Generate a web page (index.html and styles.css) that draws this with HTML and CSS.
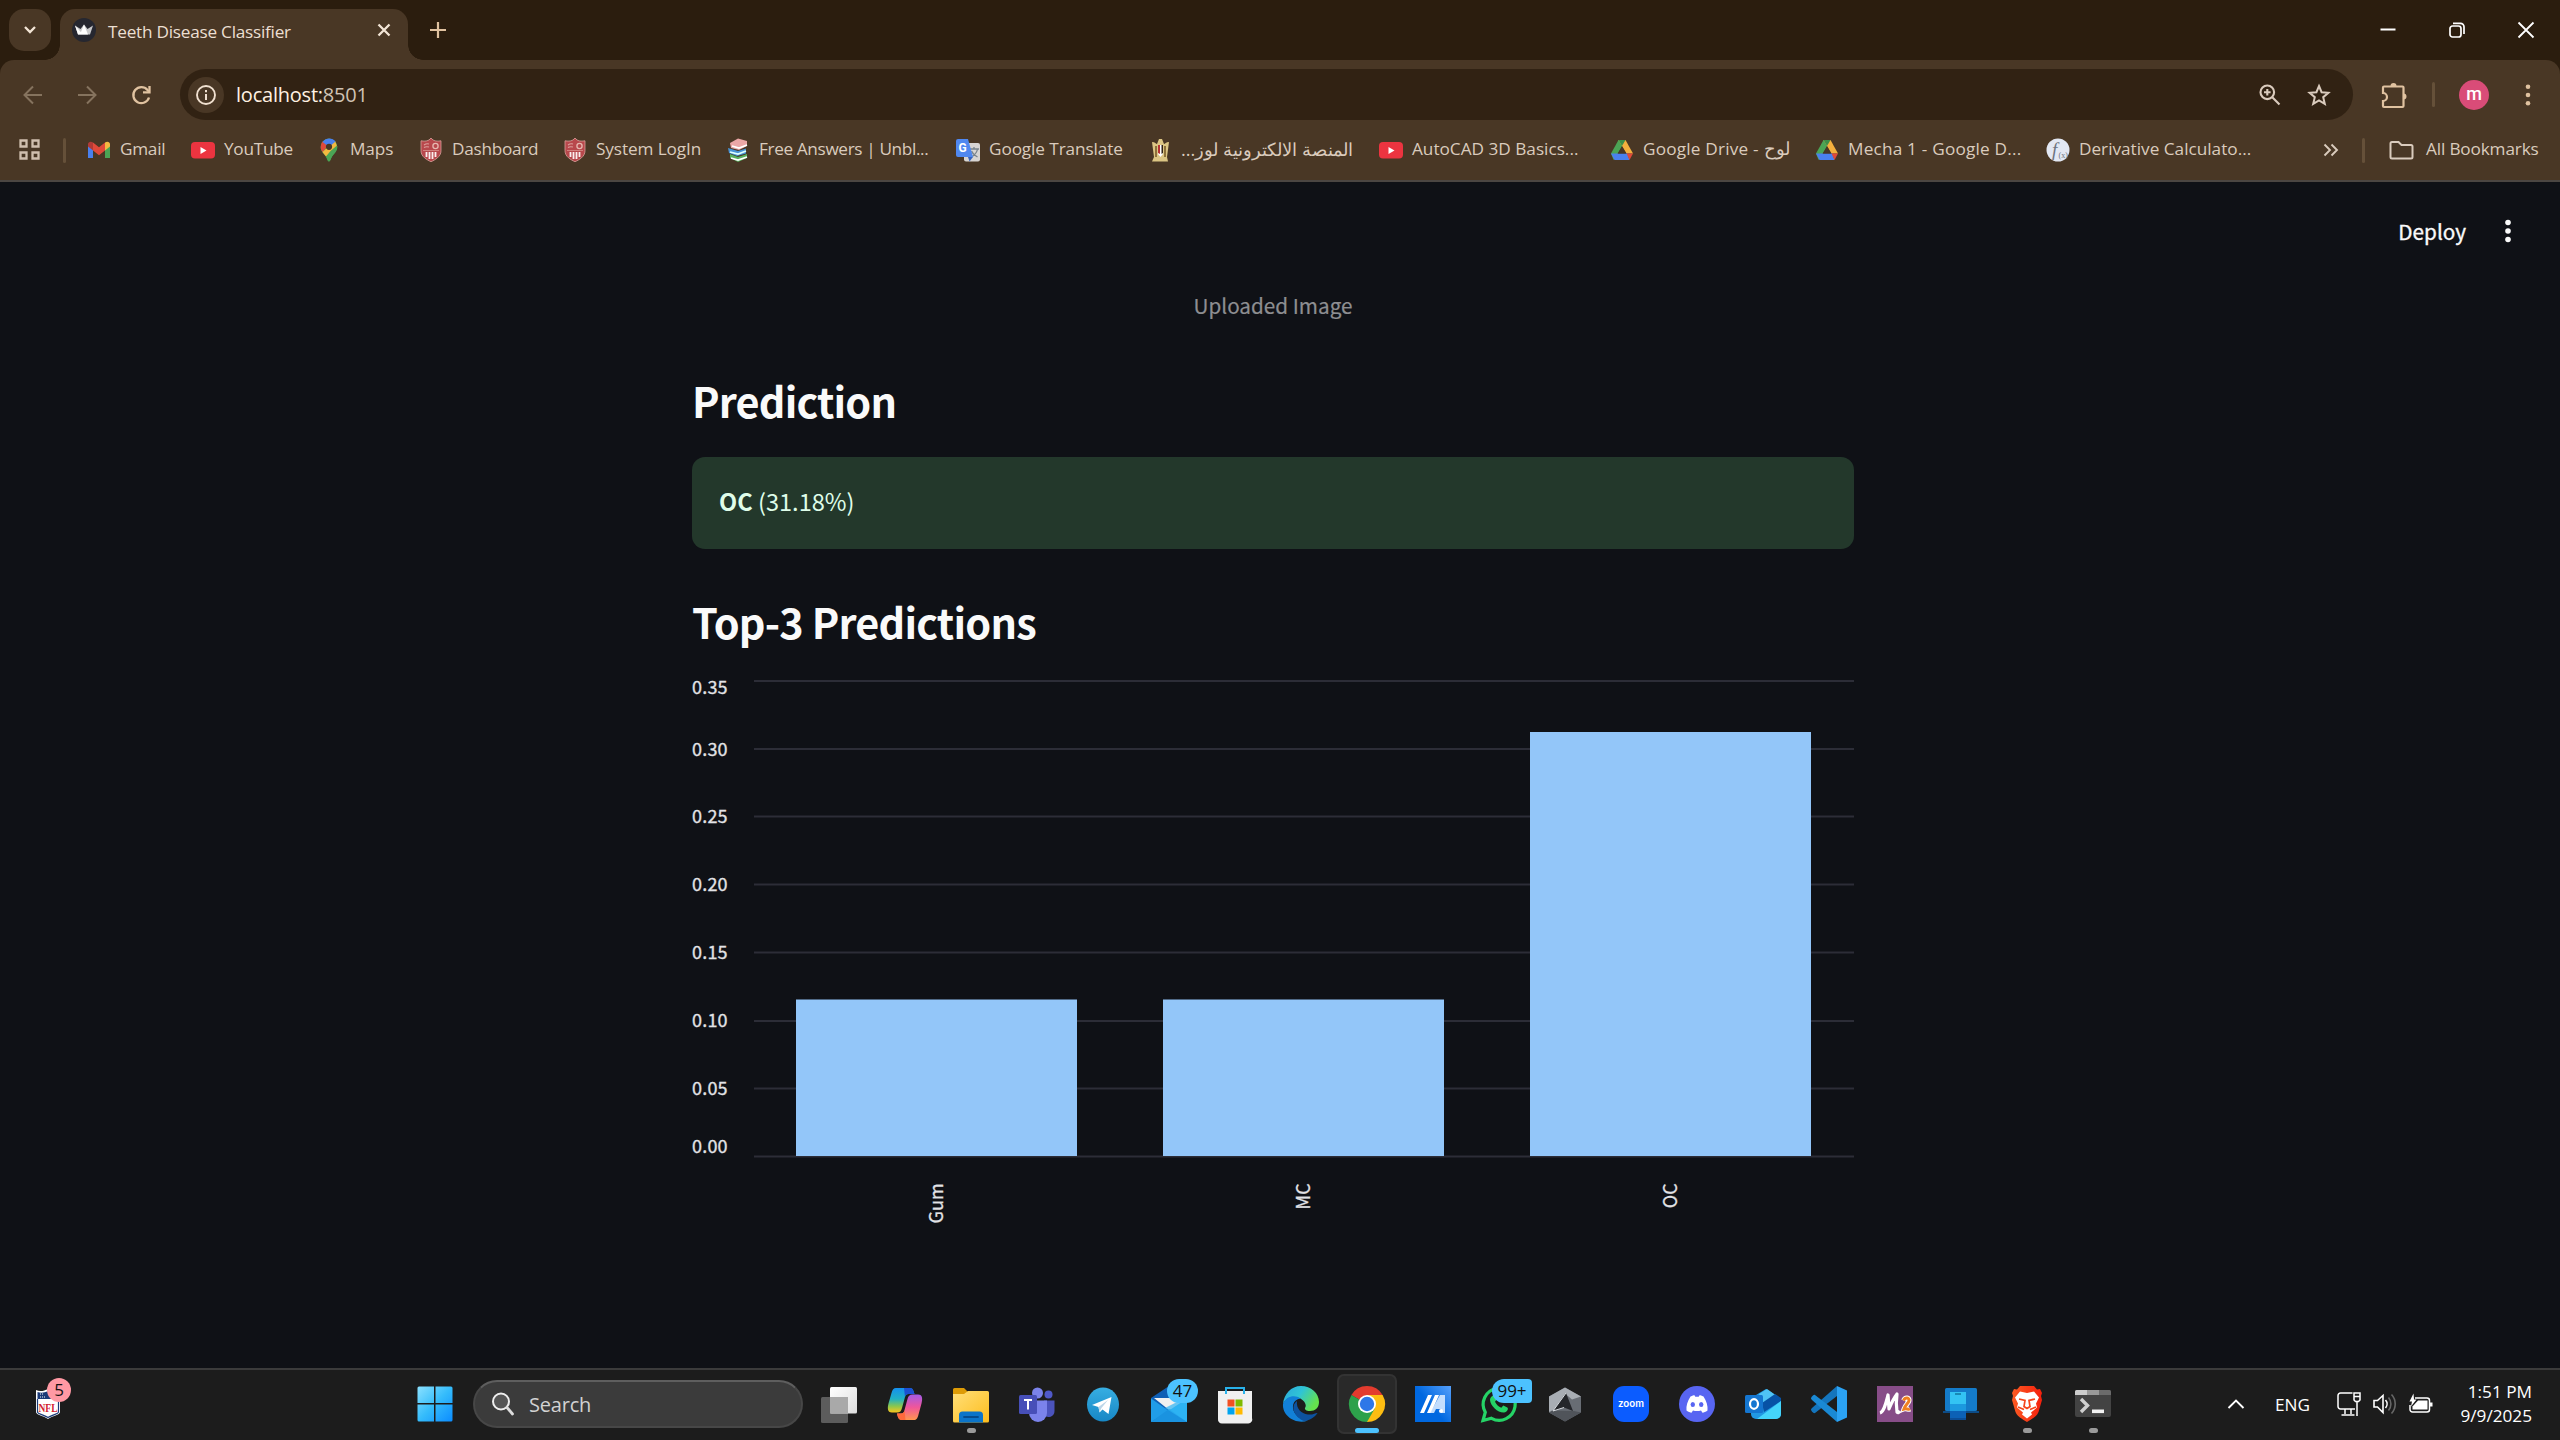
FILE: index.html
```html
<!DOCTYPE html>
<html lang="en">
<head>
<meta charset="utf-8">
<title>Teeth Disease Classifier</title>
<link rel="stylesheet" href="styles.css">
</head>
<body>
<svg class="defs" width="0" height="0" aria-hidden="true">
  <defs>
    <symbol id="youtube" viewBox="0 0 24 24"><rect y="4" width="24" height="16.500" rx="4" fill="#ec3440"/><path d="M9.500 9v7l6-3.500z" fill="#fff"/></symbol>
    <symbol id="drive" viewBox="0 0 24 24"><path d="M8.500 2h7l-8 14-4 6L1 15.500z" fill="#4ba455"/><path d="M15.500 2 23 15.500h-6.500L8.500 2z" fill="#f4b03e"/><path d="M8.500 2h7L12 8z" fill="#3c8f49"/><path d="M1 15.500h16.500L19.500 22h-15z" fill="#4a80ee"/><path d="M16.500 15.500H23L19.500 22z" fill="#e0493a"/><path d="M12 8.500l4.300 7H7.700z" fill="#493725"/></symbol>
    <symbol id="shield" viewBox="0 0 24 24"><path d="M12 0l2 2c3 1.500 5 1.200 8 .8v10c0 6-6 9-10 11C8 21.800 2 18.800 2 12.800v-10c3 .4 5 .7 8-.8z" fill="#b8484c" stroke="#d8a09b" stroke-width=".8"/><path d="M5 7c2-1.500 3.500-1.500 5-1M5 9.500c1.500-1 3-1 5-.5" stroke="#dba09c" fill="none" stroke-width="1.100"/><circle cx="16.500" cy="8" r="2.600" fill="none" stroke="#e6b8b0" stroke-width="1.300"/><path d="M4 12.500h16" stroke="#d8908c" stroke-width=".8"/><path d="M7.500 14v5M10.500 14v7M13.500 14v7M16.500 14v5" stroke="#fbeeee" stroke-width="1.800"/></symbol>
  </defs>
</svg>

<header class="browser">
  <div class="tabstrip">
    <button class="tab-search" aria-label="Search tabs"><svg width="14" height="10" viewBox="0 0 14 10"><path d="M2 2l5 5 5-5" class="line-light"/></svg></button>
    <div class="tab">
      <svg class="favicon" width="24" height="24" viewBox="0 0 24 24"><circle cx="12" cy="12" r="12" fill="#262730"/><path d="M3 7.500l5.500 3.500L12 6.500l3.500 4.500L21 7.500l-3 9H6z" fill="#c9c9cb"/><path d="M12 6.500l4 10H8zM3 7.500l8 9H6z" fill="#fff"/></svg>
      <span class="tab-title">Teeth Disease Classifier</span>
      <svg class="tab-close" width="14" height="14" viewBox="0 0 14 14"><path d="M1.500 1.500l11 11M12.500 1.500l-11 11" class="line-light"/></svg>
    </div>
    <svg class="new-tab" width="18" height="18" viewBox="0 0 18 18"><path d="M9 1v16M1 9h16" stroke="#e0c2a0" stroke-width="2.200"/></svg>
    <div class="window-controls">
      <svg width="18" height="18" viewBox="0 0 18 18"><path d="M1.500 8.500h15" stroke="#fff" stroke-width="2"/></svg>
      <svg width="18" height="18" viewBox="0 0 18 18" fill="none" stroke="#fff" stroke-width="1.700"><rect x="2" y="5" width="11" height="11" rx="2.500"/><path d="M5 2.300h7.500a3.500 3.500 0 0 1 3.500 3.500V13"/></svg>
      <svg width="18" height="18" viewBox="0 0 18 18"><path d="M1.500 1.500l15 15M16.500 1.500l-15 15" stroke="#fff" stroke-width="1.800"/></svg>
    </div>
  </div>

  <div class="toolbar">
    <div class="nav">
      <svg width="24" height="24" viewBox="0 0 24 24" fill="none" stroke="#85735e" stroke-width="2"><path d="M21 12H4M12 3.500L3.500 12l8.500 8.500"/></svg>
      <svg width="24" height="24" viewBox="0 0 24 24" fill="none" stroke="#85735e" stroke-width="2"><path d="M3 12h17M12 3.500l8.500 8.500-8.500 8.500"/></svg>
      <svg width="24" height="24" viewBox="0 0 24 24" fill="none" stroke="#e0c2a0" stroke-width="2.300"><path d="M20 14.500A8 8 0 1 1 18.500 7l1.500 1.500"/><path d="M20.500 3v6.300h-6.500"/></svg>
    </div>
    <div class="omnibox">
      <span class="site-info"><svg width="22" height="22" viewBox="0 0 22 22"><circle cx="11" cy="11" r="9" fill="none" stroke="#f0e0d0" stroke-width="1.900"/><path d="M11 10v6M11 6v2.200" stroke="#f0e0d0" stroke-width="2"/></svg></span>
      <span class="url"><b>localhost:</b>8501</span>
      <svg class="zoom" width="24" height="24" viewBox="0 0 24 24" fill="none" stroke="#dacbbd" stroke-width="2.100"><circle cx="9.300" cy="9.300" r="6.800"/><path d="M14.300 14.300l7.200 7.200M9.300 6v6.600M6 9.300h6.600"/></svg>
      <svg class="star" width="24" height="24" viewBox="0 0 24 24"><path d="M12 3l2.600 6.200 6.800.6-5.200 4.400 1.600 6.600-5.800-3.500-5.800 3.500 1.600-6.600-5.200-4.400 6.800-.6z" fill="none" stroke="#dacbbd" stroke-width="2"/></svg>
    </div>
    <div class="toolbar-end">
      <svg width="28" height="28" viewBox="0 0 28 28" fill="none" stroke="#e0c2a0" stroke-width="2.200"><path d="M4 5.500h18.500a1 1 0 0 1 1 1v18.500a1 1 0 0 1-1 1h-18.500a1 1 0 0 1-1-1v-5a4 4 0 0 0 0-8v-5.500a1 1 0 0 1 1-1z"/><path d="M10.500 5a3 3 0 0 1 6 0zM23.500 12.500a3 3 0 0 1 0 6z" fill="#e0c2a0" stroke="none"/></svg>
      <i class="divider"></i>
      <span class="avatar">m</span>
      <svg width="6" height="24" viewBox="0 0 6 24" fill="#e0c2a0"><circle cx="3" cy="3.700" r="2.300"/><circle cx="3" cy="12" r="2.300"/><circle cx="3" cy="20.300" r="2.300"/></svg>
    </div>
  </div>

  <div class="bookmark-bar">
    <svg class="apps" width="24" height="24" viewBox="0 0 24 24" fill="none" stroke="#d0bfae" stroke-width="2.300"><path d="M2.500 2.500h6v6h-6zM14.500 2.500h6v6h-6zM2.500 14.500h6v6h-6zM14.500 14.500h6v6h-6z"/></svg>
    <i class="divider"></i>
    <nav class="bookmarks">
      <a><svg width="24" height="24" viewBox="0 0 24 24"><path d="M1 5.500V20h5V11z" fill="#4a80ee"/><path d="M23 5.500V20h-5V11z" fill="#4ba455"/><path d="M1 6.500c0-3 3-3.500 5-2v8l-5-4z" fill="#b23a35"/><path d="M23 6.500c0-3-3-3.500-5-2v8l5-4z" fill="#f4b840"/><path d="M6 4.500l6 4.700 6-4.700v8l-6 4.700-6-4.700z" fill="#e0493a"/></svg><span class="tight">Gmail</span></a>
      <a><svg width="24" height="24"><use href="#youtube"/></svg><span class="tight">YouTube</span></a>
      <a><svg width="24" height="24" viewBox="0 0 24 24"><path d="M12 .5a8.500 8.500 0 0 0-8.300 8.800c0 4 3 6.200 5 9 1.500 2.300 2 5.200 3.300 5.200s1.800-2.900 3.300-5.200c2-2.800 5-5 5-9A8.500 8.500 0 0 0 12 .5z" fill="#4ba455"/><path d="M3.700 9c0-2 1-4.500 2.200-5.700l5 4.500L5.500 14c-1-1.500-1.800-3-1.800-5z" fill="#e0493a"/><path d="M5.500 14L18 2.700 20.300 9 9 18.500z" fill="#f4b840"/><path d="M13.500 13L20 7.500c.8 4-2 7-4 9.500-2 2-2.600 6.500-4 6.500s-1.800-3-3-5z" fill="#4ba455"/><path d="M5.500 4C9-.8 15.500-.5 18.500 3.500L12 9z" fill="#4a80ee"/><circle cx="12" cy="8.800" r="3.100" fill="#493725"/></svg><span class="snug">Maps</span></a>
      <a><svg width="24" height="24"><use href="#shield"/></svg><span class="tight">Dashboard</span></a>
      <a><svg width="24" height="24"><use href="#shield"/></svg><span class="snug">System LogIn</span></a>
      <a><svg width="24" height="24" viewBox="0 0 24 24"><path d="M4 5l8-4.500L21 3v5l-8 4-8-2z" fill="#eba7a7"/><path d="M6 8l7 2 8-3" stroke="#fff" stroke-width="1.800" fill="none"/><path d="M2 10l10 3 8-2.500v5L11 18l-8-3z" fill="#4894d6"/><path d="M4 14l8 2 8-3" stroke="#dff" stroke-width="1.800" fill="none"/><path d="M4 16l8 3 9-3v4l-9 4-8-4z" fill="#57b05f"/><path d="M5 20l7 2 9-3" stroke="#fff" stroke-width="1.800" fill="none"/></svg><span class="tighter">Free Answers | Unbl...</span></a>
      <a><svg width="24" height="24" viewBox="0 0 24 24"><rect x="8" y="5" width="16" height="18.500" rx="2" fill="#d8d5d3"/><path d="M14 11h9M18 9v2M21.500 11c-.5 4-3 6-6 8M15.500 13c1 2.500 3.500 4.500 6 6" stroke="#78838c" stroke-width="1.300" fill="none"/><path d="M2 1h10l5 18H2a2 2 0 0 1-2-2V3a2 2 0 0 1 2-2z" fill="#5088f0"/><path d="M12 19h5l-3.500 4.500z" fill="#3864bd"/><text x="2.500" y="14" class="g-letter">G</text></svg><span class="snug">Google Translate</span></a>
      <a><svg width="24" height="24" viewBox="0 0 24 24"><path d="M4 4c3 0 4 2 5 2l2-5h3l2 5c1 0 2-2 5-2l-2 15 1 4.500H4L6 19z" fill="#dcc684"/><path d="M8 8v11M17 8v11" stroke="#7a5c28" stroke-width="1.600"/><path d="M10 7h5v9l-2.500 3-2.500-3z" fill="#fff"/><path d="M10 7h2v9l-2-1z" fill="#b63434"/><path d="M13.500 7H15v8l-1.500 1z" fill="#312213"/></svg><span class="arabic" dir="rtl">المنصة الالكترونية لوز...</span></a>
      <a><svg width="24" height="24"><use href="#youtube"/></svg><span>AutoCAD 3D Basics...</span></a>
      <a><svg width="24" height="24"><use href="#drive"/></svg><span class="wide-text">Google Drive - <bdi class="arabic-word">لوح</bdi></span></a>
      <a><svg width="24" height="24"><use href="#drive"/></svg><span class="wide-text">Mecha 1 - Google D...</span></a>
      <a><svg width="24" height="24" viewBox="0 0 24 24"><circle cx="12" cy="12" r="11.500" fill="#e3e8f3"/><text x="6" y="18" class="fx">f</text><text x="12.500" y="20" class="fx-sub">(x)</text></svg><span>Derivative Calculato...</span></a>
    </nav>
    <svg class="more" width="16" height="14" viewBox="0 0 16 14" fill="none" stroke="#dacbbd" stroke-width="1.900"><path d="M1.500 1.500L7 7l-5.500 5.500M8.500 1.500L14 7l-5.500 5.500"/></svg>
    <i class="divider"></i>
    <svg class="folder" width="26" height="20" viewBox="0 0 26 20"><path d="M3 2h6.500l3 3H22a1.500 1.500 0 0 1 1.500 1.500V17A1.500 1.500 0 0 1 22 18.500H3A1.500 1.500 0 0 1 1.500 17V3.500A1.500 1.500 0 0 1 3 2z" fill="none" stroke="#dacbbd" stroke-width="2"/></svg>
    <span class="all-bookmarks">All Bookmarks</span>
  </div>
</header>

<main class="app">
  <div class="app-bar">
    <span class="deploy">Deploy</span>
    <svg width="8" height="26" viewBox="0 0 8 26" fill="#fafafa"><circle cx="4" cy="4.500" r="2.800"/><circle cx="4" cy="13" r="2.800"/><circle cx="4" cy="21.500" r="2.800"/></svg>
  </div>
  <section class="content">
    <p class="caption"><span>Uploaded Image</span></p>
    <h3 class="h-pred"><span>Prediction</span></h3>
    <div class="alert"><span><b>OC</b> (31.18%)</span></div>
    <h3 class="h-top"><span>Top-3 Predictions</span></h3>
    <svg class="chart" width="1162" height="560" viewBox="692 670 1162 560">
      <path class="grid" d="M754 681h1100M754 749h1100M754 816.500h1100M754 884.500h1100M754 952.500h1100M754 1021h1100M754 1088.500h1100M754 1156.500h1100"/>
      <g class="bars"><rect x="796" y="999.500" width="281" height="156.500"/><rect x="1163" y="999.500" width="281" height="156.500"/><rect x="1530" y="732" width="281" height="424"/></g>
      <g class="axis">
        <text x="692" y="694">0.35</text><text x="692" y="756">0.30</text><text x="692" y="823">0.25</text><text x="692" y="891">0.20</text><text x="692" y="959">0.15</text><text x="692" y="1027">0.10</text><text x="692" y="1095">0.05</text><text x="692" y="1153">0.00</text>
      </g>
      <g class="axis names">
        <text transform="translate(942.500 1183) rotate(-90)">Gum</text><text transform="translate(1309.500 1183) rotate(-90)">MC</text><text transform="translate(1676.500 1183) rotate(-90)">OC</text>
      </g>
    </svg>
  </section>
</main>

<footer class="taskbar">
  <div class="widget"><svg width="26" height="32" viewBox="0 0 26 32"><path d="M1 2c4 2 8 1 12-1 4 2 8 3 12 1v22c0 3-8 4-12 7-4-3-12-4-12-7z" fill="#fff"/><path d="M2.500 4c4 1.500 7 .5 10.500-1 3.500 1.500 6.500 2.500 10.500 1v7h-21z" fill="#1b3a78"/><path d="M2.500 11v13c0 2 7 3 10.500 5.500C16.500 27 23.500 26 23.500 24V11" fill="none" stroke="#1b3a78" stroke-width="1.200"/><path d="M5 6h3M5 9h5M17 6h3" stroke="#fff" stroke-dasharray="1 1"/><text x="3.500" y="24" class="nfl" textLength="19" lengthAdjust="spacingAndGlyphs">NFL</text></svg><span class="badge pink">5</span></div>

  <svg class="start" width="36" height="36" viewBox="0 0 36 36"><defs><linearGradient id="win" x2="1" y2="1"><stop stop-color="#8be1ff"/><stop offset=".5" stop-color="#35bcfb"/><stop offset="1" stop-color="#0b8cff"/></linearGradient></defs><path d="M2 .5h15v16.500H.5V2A1.500 1.500 0 0 1 2 .5zM18.500.5H34A1.500 1.500 0 0 1 35.500 2v15h-17zM.5 18.500H17v17H2A1.500 1.500 0 0 1 .5 34zM18.500 18.500h17V34a1.500 1.500 0 0 1-1.500 1.500H18.500z" fill="url(#win)"/></svg>

  <div class="search"><svg width="24" height="26" viewBox="0 0 24 26"><circle cx="10" cy="10.500" r="8" fill="#555" stroke="#eee" stroke-width="2"/><path d="M16 16.500l5.500 6.500" stroke="#ddd" stroke-width="2.800" stroke-linecap="round"/></svg><span>Search</span></div>

  <div class="apps-row">
    <div class="app-icon"><svg viewBox="0 0 36 36"><defs><linearGradient id="tv" x2="1" y2="1"><stop stop-color="#fff"/><stop offset="1" stop-color="#dedede"/></linearGradient></defs><rect x="0" y="11" width="27" height="26" rx="1.500" fill="#5c5c5c"/><rect x="9" y="1" width="27" height="26.500" rx="1.500" fill="url(#tv)"/><path d="M9 11h18v16.500H9z" fill="#a9a9a9"/></svg></div>
    <div class="app-icon"><svg viewBox="0 0 36 36"><defs><linearGradient id="c1" x2="0" y2="1"><stop stop-color="#1590ef"/><stop offset=".45" stop-color="#20b1c4"/><stop offset=".75" stop-color="#8dc74c"/><stop offset="1" stop-color="#fbc51c"/></linearGradient><linearGradient id="c2" x2="0" y2="1"><stop stop-color="#a25ae8"/><stop offset=".5" stop-color="#f0569a"/><stop offset="1" stop-color="#ff974e"/></linearGradient></defs><path d="M9 2h14c3 0 3.500 3 4.500 6h-6c-2 0-3 1-3.500 3l-3 11c-.8 3-2 4.500-5 4.500H5c-5 0-4.500-5-3.500-9L4.500 7C5.500 3.500 6.500 2 9 2z" fill="url(#c1)"/><path d="M17 2h6c3 0 3.500 3 4.500 6h-6c-2 0-3 1-3.500 3z" fill="#1b50d2"/><path d="M27 34H15c-3 0-4-2-5-6.500h4c2.500 0 3-1.500 3.500-3.500l3-11c.8-3 2-4.500 5-4.500H31c5 0 4.500 5 3.500 9l-3 11C30.500 32.500 29.500 34 27 34z" fill="url(#c2)"/><path d="M10 27.500h4c2.500 0 3-1.500 3.500-3.500l1 10H15c-3 0-4-2-5-6.500z" fill="#ff6a3c"/></svg></div>
    <div class="app-icon"><svg viewBox="0 0 36 36"><defs><linearGradient id="fe" x2="1" y2="1"><stop stop-color="#ffdf79"/><stop offset="1" stop-color="#fdbd1d"/></linearGradient></defs><path d="M0 3.500A1.500 1.500 0 0 1 1.500 2H11l4 4-3 3H0z" fill="#dd9b06"/><path d="M0 8h11l4-3h19.500A1.500 1.500 0 0 1 36 6.500V35a1.500 1.500 0 0 1-1.500 1.500h-33A1.500 1.500 0 0 1 0 35z" fill="url(#fe)"/><path d="M6 36.500V29a3.500 3.500 0 0 1 3.500-3.500h17A3.500 3.500 0 0 1 30 29v7.500z" fill="#0b74c9"/><path d="M11 31h14" stroke="#064b8c" stroke-width="1.800" stroke-linecap="round"/></svg><i class="dot"></i></div>
    <div class="app-icon"><svg viewBox="0 0 36 36"><circle cx="29.500" cy="8.500" r="4" fill="#5059c9"/><path d="M25 14.500h10.500V25a6 6 0 0 1-10.500 4z" fill="#4b53bc"/><circle cx="18.500" cy="7" r="5.500" fill="#7b83eb"/><path d="M10 14.500h18V27a9 9 0 0 1-18 0z" fill="#7b83eb"/><rect y="9" width="18" height="19" rx="1.500" fill="#474fb8"/><path d="M5 14h8M9 14v9.500" stroke="#fff" stroke-width="2"/></svg></div>
    <div class="app-icon"><svg viewBox="0 0 36 36"><defs><linearGradient id="tg" x2="0" y2="1"><stop stop-color="#37aee2"/><stop offset="1" stop-color="#1787c5"/></linearGradient></defs><ellipse cx="18" cy="18.500" rx="16" ry="17" fill="url(#tg)"/><path d="M7 19L26.500 11l-3 17-6-4.500-3 3-1-5.500z" fill="#fff"/><path d="M13.500 21l9.500-7-6.500 8-2 4z" fill="#bcd6e8"/></svg></div>
    <div class="app-icon"><svg viewBox="0 0 36 36"><path d="M0 12L18 0l18 12v24H0z" fill="#0f5fb5"/><path d="M3 12h30v8L18 24z" fill="#f0f0f0"/><path d="M0 12.500L18 25 0 36z" fill="#209de8"/><path d="M36 12.500L18 24.500 36 36z" fill="#2fb4f4"/><path d="M0 36l18-13 18 13z" fill="#1a93e0"/><path d="M14 22L36 11v25z" fill="#2cb2f2" opacity=".7"/></svg><span class="badge mail">47</span></div>
    <div class="app-icon"><svg viewBox="0 0 36 36"><path d="M9 8V2h18v6" fill="none" stroke="#28b1ea" stroke-width="2"/><path d="M1 5h34v27a4 4 0 0 1-4 5.500H5A4 4 0 0 1 1 33z" fill="#f0f0f0"/><path d="M9 8V5M27 8V5" stroke="#28b1ea" stroke-width="2"/><path d="M10.500 13.500h7v7h-7z" fill="#f25022"/><path d="M18.500 13.500h7v7h-7z" fill="#7fba00"/><path d="M10.500 21.500h7v7h-7z" fill="#00a4ef"/><path d="M18.500 21.500h7v7h-7z" fill="#ffb900"/></svg></div>
    <div class="app-icon"><svg viewBox="0 0 36 36"><defs><linearGradient id="ed" x2="1" y2=".5"><stop stop-color="#2ba6dc"/><stop offset=".5" stop-color="#2fc4d6"/><stop offset="1" stop-color="#65e24d"/></linearGradient></defs><path d="M0 18C1 8 8 0 18 0c10 0 18 7 18 16 0 6-4 9-9 9-4 0-5.500-1.500-5-3 1-1.500 1-3 0-5C18 10 5 8 0 18z" fill="url(#ed)"/><path d="M0 18C3 10 12 8.500 17.500 12.500c-8 1-9 9-6 14C14 31 20 35 25 34.500 13 39-1 30 0 18z" fill="#1280d8"/><path d="M14 15c-7 5-3 16 7 20 5 0 11-4 13.500-8-1-.5-4.500 2-9.500 1.500-7-1-12-6-11-13.500z" fill="#0d529f"/></svg></div>
    <div class="app-icon active"><svg viewBox="0 0 36 36"><path d="M18 18L2.400 9A18 18 0 0 1 33.600 9z" fill="#e33b2e"/><path d="M18 18L2.400 9A18 18 0 0 0 18 36l7.800-13.500z" fill="#2da14b"/><path d="M18 18V9h15.600A18 18 0 0 1 18 36z" fill="#fdbd12"/><path d="M10.200 22.500L18 36l7.800-13.500z" fill="#2da14b"/><circle cx="18" cy="18" r="9" fill="#fff"/><circle cx="18" cy="18" r="7.200" fill="#2d77e8"/></svg><i class="running"></i></div>
    <div class="app-icon"><svg viewBox="0 0 36 36"><defs><linearGradient id="ma" x1="1" x2=".4" y2=".5"><stop stop-color="#55a0fb"/><stop offset="1" stop-color="#0068e0"/></linearGradient></defs><path d="M0 0h36v36H0z" fill="url(#ma)"/><path d="M13 9h4L9 27H5zM20 9h4l-8 18h-4z" fill="#fff"/><path d="M25 9h5v18h-4v-4h-5l-2 4h-4z" fill="#d5e8ff" opacity=".9"/><circle cx="26" cy="25" r="2" fill="#fff"/></svg></div>
    <div class="app-icon"><svg viewBox="0 0 36 36"><path d="M2 34.500l2.300-8.300A16 16 0 1 1 10.500 32.300z" fill="#1c1c1c" stroke="#25d366" stroke-width="3.200"/><path d="M12 9.500c1-.6 2 0 2.500 1l1.200 3-1.700 2.300c1.500 3.200 3.500 4.700 6.300 6l2-2.200 4 2c1.500 1 0 4.500-3.300 5C17 27 9.500 20 9 14c0-2 1.500-4 3-4.500z" fill="#25d366"/></svg><span class="badge wide">99+</span></div>
    <div class="app-icon"><svg viewBox="0 0 36 36"><path d="M18 1.500l16 9v16l-16 9-16-9v-16z" fill="#686d74"/><path d="M18 1.500l16 9-9 3-7-6-13 19-3-1v-15z" fill="#a8adb3"/><path d="M18 35.500l-16-9 3-2 22 .5 7 1.500z" fill="#50545a"/><path d="M19 7l7 18-9-3.500-11 3.500z" fill="#24262a"/><path d="M19 7L6 25l11-3.500" fill="none" stroke="#d6dade" stroke-width="1"/></svg></div>
    <div class="app-icon"><svg viewBox="0 0 36 36"><rect width="36" height="36" rx="11" fill="#0b5cff"/><text x="18" y="21" class="zoom-word" textLength="26" lengthAdjust="spacingAndGlyphs">zoom</text></svg></div>
    <div class="app-icon"><svg viewBox="0 0 36 36"><circle cx="18" cy="18" r="18" fill="#5865f2"/><path d="M11.500 10.500c2-1 3-1.200 4-1.300l.8 1.500h3.400l.8-1.500c1 .1 2 .3 4 1.300 3 5 4.500 9 4 14-2 1.500-3.500 2-5 2.300l-1.500-2.300c-2.500.7-5.500.7-8 0l-1.500 2.300c-1.500-.3-3-.8-5-2.300-.5-5 1-9 4-14z" fill="#fff"/><ellipse cx="13.800" cy="18.500" rx="2.200" ry="2.500" fill="#5865f2"/><ellipse cx="22.200" cy="18.500" rx="2.200" ry="2.500" fill="#5865f2"/></svg></div>
    <div class="app-icon"><svg viewBox="0 0 36 36"><path d="M6 12L21 3l15 10v15a5 5 0 0 1-5 5H11a5 5 0 0 1-5-5z" fill="#2198e3"/><path d="M14 8l8-5 10 7-14 9z" fill="#4fc4f5"/><path d="M17 17L30 8l6 4v3L19 26z" fill="#0752a5"/><path d="M36 15v13a5 5 0 0 1-5 5H12z" fill="#44d4fb"/><rect y="9" width="18" height="18" rx="1.500" fill="#1576d0"/><ellipse cx="9" cy="18" rx="4" ry="4.800" fill="none" stroke="#fff" stroke-width="2.200"/></svg></div>
    <div class="app-icon"><svg viewBox="0 0 36 36"><path d="M26 0v10L4 27c-1 .6-3-1-4-3 0-1 .5-1.500 1-2z" fill="#1475bd"/><path d="M26 36V26L4 9c-1-.6-3 1-4 3 0 1 .5 1.500 1 2z" fill="#1a89d4"/><path d="M26 0l10 4.500v27L26 36z" fill="#2ba2f3"/></svg></div>
    <div class="app-icon"><svg viewBox="0 0 36 36"><path d="M0 0h36v36H0z" fill="#874d88"/><path d="M3 27c4-1 6-10 8-18 .5 5 .5 9 1 14 2-5 5-11 8-15-1 7-1 12 0 18 1 1 2 .5 3-1" fill="none" stroke="#fff" stroke-width="3.200" stroke-linejoin="round"/><path d="M26.500 14.500c2-4 6-2.500 5.500 0-.5 3-3.500 4-5 8.500 3-1 4 1 6 0" fill="none" stroke="#fff" stroke-width="5"/><path d="M26.500 14.500c2-4 6-2.500 5.500 0-.5 3-3.500 4-5 8.500 3-1 4 1 6 0" fill="none" stroke="#f08020" stroke-width="3"/></svg></div>
    <div class="app-icon"><svg viewBox="0 0 36 36"><rect x="2" y="2" width="32" height="23" rx="1.500" fill="#147bc9"/><path d="M0 25h36v2H0z" fill="#0d4c87"/><path d="M7 6h16v12H7z" fill="#33c3f3"/><path d="M7 18h16v7H7z" fill="#1c99df"/><path d="M7 25h16v7H7z" fill="#0c61b6"/><path d="M7 32h16v2H7z" fill="#0b4d96"/><path d="M12 8h6" stroke="#12779f" stroke-width="1.500"/></svg></div>
    <div class="app-icon"><svg viewBox="0 0 36 36"><defs><linearGradient id="br" x2="1"><stop stop-color="#fb5a22"/><stop offset="1" stop-color="#f5200d"/></linearGradient></defs><path d="M11 0h14l3 3.500 3-.5 2 4-1 3 1 4-3.500 12c-2 5-7 7-11.500 10-4.500-3-9.500-5-11.500-10L3 14l1-4-1-3 2-4 3 .5z" fill="url(#br)"/><path d="M18 7l7-1.500 5 6-3 6 1 4-6 5 1 2-5 4-5-4 1-2-6-5 1-4-3-6 5-6z" fill="#fff"/><path d="M10 13l6 1.500-1 6 3 2 3-2-1-6 6-1.500M9 21l6 2.500M27 21l-6 2.500" fill="none" stroke="#f5451b" stroke-width="1.700"/></svg><i class="dot"></i></div>
    <div class="app-icon"><svg viewBox="0 0 36 36"><rect y="4" width="36" height="27" rx="2" fill="#434343"/><path d="M0 9V5.500A1.500 1.500 0 0 1 1.500 4H12v5z" fill="#ccc"/><path d="M12 4h12v5H12z" fill="#999"/><path d="M24 4h10.500A1.500 1.500 0 0 1 36 5.500V9H24z" fill="#6b6b6b"/><path d="M6 13l6.500 6.500L6 26" fill="none" stroke="#d0d0d0" stroke-width="3.400"/><path d="M17 25.300h12" stroke="#f2f2f2" stroke-width="3.600"/></svg><i class="dot"></i></div>
  </div>

  <div class="tray">
    <svg width="18" height="12" viewBox="0 0 18 12"><path d="M1.500 10L9 2.500l7.500 7.500" fill="none" stroke="#fff" stroke-width="1.900"/></svg>
    <span class="lang">ENG</span>
    <div class="status">
      <svg width="24" height="26" viewBox="0 0 24 26" fill="none" stroke="#fff" stroke-width="1.500"><path d="M15.500 2H3.500A2.500 2.500 0 0 0 1 4.500v11A2.500 2.500 0 0 0 3.500 18H18M8 18v5M14 18v5M4.500 24h13"/><path d="M17 2h6v7l-1.500 1.500h-3L17 9zM17 5.500h6M20 10.500V25"/></svg>
      <svg width="24" height="22" viewBox="0 0 24 22" fill="none" stroke="#fff" stroke-width="1.600"><path d="M1 7.500h3.500L10 2.500v17L4.500 14H1z"/><path d="M12.500 7a6 6 0 0 1 0 8"/><path d="M15.500 4.500a10 10 0 0 1 0 13M18.500 1.500a14 14 0 0 1 0 19" stroke="#666"/></svg>
      <svg width="24" height="22" viewBox="0 0 24 22"><path d="M6 5h12a2.500 2.500 0 0 1 2.500 2.500v9A2.500 2.500 0 0 1 18 19H3.500A2.500 2.500 0 0 1 1 16.500V12" fill="none" stroke="#fff" stroke-width="1.500"/><path d="M9 7.500h9.500v9H3.500v-3z" fill="#fff"/><path d="M21 9.500h2.500v4H21zM4.500.5l-4 8H3l-1 5 5.500-7H5z" fill="#fff"/></svg>
    </div>
    <div class="clock"><span class="time">1:51 PM</span><span class="date">9/9/2025</span></div>
  </div>
</footer>
</body>
</html>
```
FILE: styles.css
```css
* { box-sizing: border-box; }
body {
  margin: 0;
  width: 2560px;
  height: 1440px;
  overflow: hidden;
  display: grid;
  grid-template-rows: 182px 1186px 72px;
  background: #0f1116;
  font-family: "Open Sans", "Noto Sans", sans-serif;
}
svg { display: block; flex: none; }
.defs { position: absolute; }
.line-light { fill: none; stroke: #f3e5d6; stroke-width: 2.3; }
.divider { width: 3px; height: 25px; border-radius: 2px; background: #655039; flex: none; }

/* Browser chrome */
.browser { background: #2b1d0e; border-bottom: 2px solid #4b4642; display: grid; grid-template-rows: 60px 60px 60px; }
.tabstrip { display: flex; align-items: center; padding: 0 25px 0 9px; }
.tab-search { width: 42px; height: 42px; border: 0; border-radius: 15px; background: #493725; display: grid; place-items: center; padding: 0; }
.tab { position: relative; align-self: flex-end; margin-left: 9px; width: 348px; height: 51px; border-radius: 15px 15px 0 0; background: #493725; display: flex; align-items: center; padding: 0 17px 9px 12px; }
.tab::before, .tab::after { content: ""; position: absolute; bottom: 0; width: 15px; height: 15px; }
.tab::before { left: -15px; background: radial-gradient(circle at 0 0, transparent 14.5px, #493725 15px); }
.tab::after { right: -15px; background: radial-gradient(circle at 100% 0, transparent 14.5px, #493725 15px); }
.tab-title { margin-left: 12px; padding-top: 3px; font-size: 17.2px; letter-spacing: -.24px; color: #ecdfd2; white-space: nowrap; flex: 1; }
.new-tab { margin-left: 21px; }
.window-controls { margin-left: auto; display: flex; gap: 51px; }
.toolbar { background: #493725; display: flex; align-items: center; padding-top: 9px; border-radius: 14px 14px 0 0; }
.nav { display: flex; gap: 30px; margin-left: 21px; width: 159px; }
.omnibox { width: 2173px; height: 51px; border-radius: 26px; background: #312213; display: flex; align-items: center; padding: 0 22px 0 8px; }
.site-info { width: 36px; height: 36px; border-radius: 50%; background: #493725; display: grid; place-items: center; }
.url { margin-left: 12px; font-size: 20px; letter-spacing: -.22px; color: #d0c3b4; flex: 1; }
.url b { font-weight: 400; color: #fff1e2; }
.star { margin-left: 25px; }
.toolbar-end { display: flex; align-items: center; margin-left: 27px; }
.toolbar-end .divider { margin-left: 24px; }
.avatar { margin-left: 24px; width: 30px; height: 30px; border-radius: 50%; background: #d94c78; color: #fff; font: 500 18px/28px Roboto, sans-serif; text-align: center; }
.avatar + svg { margin-left: 36px; }
.bookmark-bar { background: #493725; display: flex; align-items: center; color: #dacbbd; font-size: 17.2px; white-space: nowrap; }
.apps { margin-left: 18px; }
.apps + .divider { margin-left: 21px; }
.bookmarks { margin-left: 21px; width: 2236px; display: grid; grid-template-columns: 104px 126px 102px 144px 163px 230px 192px 231px 231px 205px 231px 1fr; }
.bookmarks a { display: flex; align-items: center; gap: 9px; }
.bookmarks span, .all-bookmarks { padding-bottom: 2px; line-height: 24px; }
.snug { letter-spacing: -.1px; }
.tight { letter-spacing: -.27px; }
.tighter { letter-spacing: -.36px; }
.wide-text { letter-spacing: .2px; }
.arabic { font-size: 18.1px; }
.arabic-word { font-size: 18.4px; line-height: 1; letter-spacing: 0; }
.g-letter { font: 700 12px Roboto, sans-serif; fill: #fff; }
.fx { font: italic 19px "Liberation Serif", serif; fill: #6d7480; }
.fx-sub { font: 8px "Liberation Serif", serif; fill: #6d7480; }
.more + .divider { margin-left: 23px; }
.folder { margin-left: 24px; }
.all-bookmarks { margin-left: 11px; letter-spacing: -.15px; }

/* Streamlit page */
.app { font-family: "Noto Sans CJK SC", sans-serif; color: #fafafa; }
.app-bar { height: 98px; display: flex; justify-content: flex-end; align-items: center; padding-right: 48px; gap: 38px; }
.deploy { font-size: 20.7px; padding-bottom: 1px; -webkit-text-stroke: .35px currentColor; }
.content { width: 1162px; margin: 0 0 0 692px; }
.content p, .content h3 { margin: 0; white-space: nowrap; }
.caption { height: 51px; line-height: 50px; text-align: center; font-size: 20.7px; color: #8d8e91; -webkit-text-stroke: .2px currentColor; }
.h-pred { height: 126px; line-height: 138px; font-size: 41.4px; letter-spacing: -.8px; }
.alert { height: 92px; border-radius: 13px; background: #23382b; color: #dffde9; padding-left: 27px; font-size: 23.6px; line-height: 89px; }
.h-top { height: 121px; line-height: 144px; font-size: 41.4px; letter-spacing: -.77px; }
.grid { stroke: #2c2d37; stroke-width: 2; fill: none; }
.bars { fill: #93c6f9; }
.axis { fill: #e2e3e6; stroke: #e2e3e6; stroke-width: .3; font-size: 18px; letter-spacing: .2px; }
.names { text-anchor: end; }

/* Taskbar */
.taskbar { background: #1c1c1c; border-top: 2px solid #3b3b3b; display: flex; align-items: center; color: #fff; padding-bottom: 2px; }
.widget { position: relative; width: 417px; padding-left: 35px; }
.nfl { font: 700 13px "Liberation Serif", serif; fill: #d3202f; }
.badge { position: absolute; height: 24px; border-radius: 12px; background: #4cc2ff; color: #111; font-size: 17px; line-height: 23px; text-align: center; }
.pink { left: 47px; top: -10px; width: 24px; background: #ff99a4; }
.search { margin-left: 20px; width: 330px; height: 48px; border: 2px solid #474747; border-top-color: #5e5e5e; border-radius: 24px; background: #3b3b3b; display: flex; align-items: center; padding-left: 16px; gap: 14px; font-size: 20px; letter-spacing: -.2px; color: #d2d2d2; }
.apps-row { margin-left: 6px; display: flex; gap: 6px; }
.app-icon { position: relative; width: 60px; height: 60px; border-radius: 7px; display: grid; place-items: center; }
.app-icon svg { width: 36px; height: 36px; overflow: visible; }
.active { background: #292929; border: 2px solid #333; }
.dot, .running { position: absolute; bottom: 1px; left: 50%; height: 5px; width: 9px; margin-left: -4px; border-radius: 3px; background: #9a9a9a; }
.running { bottom: -1px; width: 24px; margin-left: -12px; background: #4cc2ff; }
.mail { left: 28px; top: 5px; width: 31px; }
.wide { left: 23px; top: 5px; width: 40px; border-radius: 12px 4px 4px 12px; }
.zoom-word { font: 600 10px Inter, sans-serif; fill: #fff; text-anchor: middle; }
.tray { margin-left: auto; display: flex; align-items: center; padding-right: 28px; }
.lang { margin-left: 30px; width: 35px; font-size: 17.2px; }
.status { margin-left: 27px; display: flex; align-items: center; gap: 12px; }
.clock { width: 99px; display: flex; flex-direction: column; align-items: flex-end; font-size: 17.2px; line-height: 24px; }
```
